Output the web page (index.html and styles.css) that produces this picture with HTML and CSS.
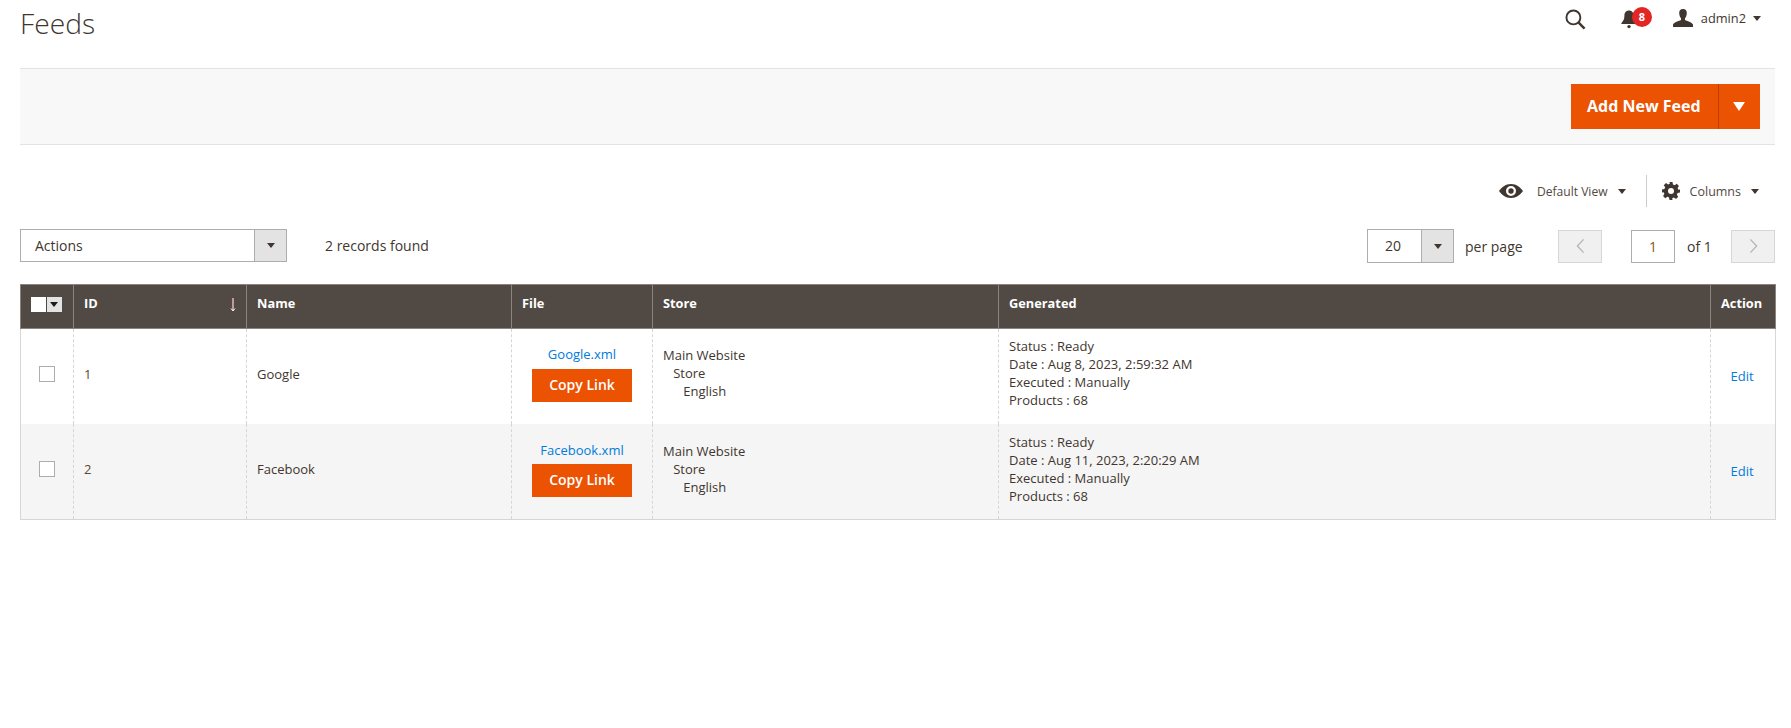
FILE: index.html
```html
<!DOCTYPE html>
<html lang="en">
<head>
<meta charset="utf-8">
<title>Feeds</title>
<link rel="stylesheet" href="styles.css">
</head>
<body>
<div class="page">
  <header class="top">
    <h1 class="title">Feeds</h1>
    <div class="top-actions">
      <svg class="ic-search" viewBox="0 0 22 22" width="21" height="21"><circle cx="8.8" cy="8.8" r="7.3" fill="none" stroke="#41362f" stroke-width="2"/><path d="M14 14l6.500 6.500" stroke="#41362f" stroke-width="2.600" fill="none"/></svg>
      <div class="bell">
        <svg viewBox="0 0 16 20" width="16" height="20"><path d="M8 1.500c-3 0-4.600 2.200-4.600 5.200 0 3.600-1.200 5.400-3 7.200v1.200h15.200v-1.200c-1.800-1.800-3-3.600-3-7.200C12.600 3.700 11 1.500 8 1.500z" fill="#41362f"/><circle cx="8" cy="17.600" r="1.700" fill="#41362f"/></svg>
        <span class="badge">8</span>
      </div>
      <div class="user">
        <svg viewBox="0 0 20 18" width="20" height="18"><path d="M10 0c-2.800 0-4 2-3.800 4.500.2 2.300 1 3.800 1.800 4.800v1.700c-2 1-7 2-8 4.500V18h20v-2.500c-1-2.500-6-3.500-8-4.500V9.300c.8-1 1.600-2.500 1.800-4.800C14 2 12.800 0 10 0z" fill="#41362f"/></svg>
        <span class="user-name">admin2</span>
        <i class="caret caret-sm"></i>
      </div>
    </div>
  </header>

  <div class="page-bar">
    <div class="split">
      <span class="split-main">Add New Feed</span>
      <span class="split-toggle"><i class="caret caret-white"></i></span>
    </div>
  </div>

  <div class="view-row">
    <div class="view-item">
      <svg viewBox="0 0 24 14" width="24" height="14"><path d="M12 0C6.500 0 2.400 3.600 0 7c2.400 3.400 6.500 7 12 7s9.600-3.600 12-7c-2.400-3.400-6.500-7-12-7zm0 12a5 5 0 1 1 0-10 5 5 0 0 1 0 10z" fill="#41362f" fill-rule="evenodd"/><circle cx="12" cy="7" r="2.700" fill="#41362f"/></svg>
      <span class="view-label view-label-first">Default View</span>
      <i class="caret caret-sm"></i>
    </div>
    <div class="view-item view-cols">
      <svg viewBox="0 0 24 24" width="18" height="18"><path d="M10 0h4l.6 3.200 2.300 1 2.800-1.800 2.900 2.900-1.800 2.800 1 2.300L24 10v4l-3.200.6-1 2.300 1.800 2.800-2.900 2.900-2.800-1.800-2.300 1L14 24h-4l-.6-3.200-2.300-1-2.800 1.800-2.900-2.900 1.800-2.800-1-2.300L0 14v-4l3.200-.6 1-2.300L2.400 4.300l2.900-2.900 2.800 1.800 2.300-1zM12 8a4 4 0 1 0 0 8 4 4 0 0 0 0-8z" fill="#41362f" fill-rule="evenodd"/></svg>
      <span class="view-label">Columns</span>
      <i class="caret caret-sm"></i>
    </div>
  </div>

  <div class="toolbar">
    <div class="tool-left">
      <div class="select select-actions"><span class="select-text">Actions</span><span class="select-arrow"><i class="caret caret-sm"></i></span></div>
      <span class="records">2 records found</span>
    </div>
    <div class="tool-right">
      <div class="select select-page"><span class="select-text select-num">20</span><span class="select-arrow"><i class="caret caret-sm"></i></span></div>
      <span class="per-page">per page</span>
      <span class="pager-btn pager-prev"><svg viewBox="0 0 10 18" width="9" height="16"><path d="M8.500 1.500L1.500 9l7 7.500" fill="none" stroke="#b5b5b5" stroke-width="1.500"/></svg></span>
      <span class="pager-input">1</span>
      <span class="of">of 1</span>
      <span class="pager-btn"><svg viewBox="0 0 10 18" width="9" height="16"><path d="M1.500 1.500l7 7.500-7 7.500" fill="none" stroke="#b5b5b5" stroke-width="1.500"/></svg></span>
    </div>
  </div>

  <table class="grid">
    <colgroup>
      <col class="c-check"><col class="c-id"><col class="c-name"><col class="c-file"><col class="c-store"><col class="c-gen"><col class="c-act">
    </colgroup>
    <thead>
      <tr>
        <th class="th-check"><span class="mass"><span class="mass-box"></span><span class="mass-arrow"><i class="caret caret-tiny"></i></span></span></th>
        <th class="th-id">ID<svg class="sort" viewBox="0 0 6 13" width="6" height="13"><path d="M3 0v12" fill="none" stroke="#e9b8ae" stroke-width="1.500"/><path d="M1 10.500L3 13l2-2.500" fill="none" stroke="#fff" stroke-width="1"/></svg></th>
        <th>Name</th>
        <th>File</th>
        <th>Store</th>
        <th>Generated</th>
        <th>Action</th>
      </tr>
    </thead>
    <tbody>
      <tr>
        <td class="mid"><span class="check"></span></td>
        <td class="mid td-id">1</td>
        <td class="mid">Google</td>
        <td class="td-file"><a class="link">Google.xml</a><span class="copy">Copy Link</span></td>
        <td class="td-store">Main Website<br>&nbsp;&nbsp;&nbsp;Store<br>&nbsp;&nbsp;&nbsp;&nbsp;&nbsp;&nbsp;English</td>
        <td class="td-gen">Status : Ready<br>Date : Aug 8, 2023, 2:59:32 AM<br>Executed : Manually<br>Products : 68</td>
        <td class="td-act"><a class="link">Edit</a></td>
      </tr>
      <tr class="alt">
        <td class="mid"><span class="check"></span></td>
        <td class="mid td-id">2</td>
        <td class="mid">Facebook</td>
        <td class="td-file"><a class="link">Facebook.xml</a><span class="copy">Copy Link</span></td>
        <td class="td-store">Main Website<br>&nbsp;&nbsp;&nbsp;Store<br>&nbsp;&nbsp;&nbsp;&nbsp;&nbsp;&nbsp;English</td>
        <td class="td-gen">Status : Ready<br>Date : Aug 11, 2023, 2:20:29 AM<br>Executed : Manually<br>Products : 68</td>
        <td class="td-act"><a class="link">Edit</a></td>
      </tr>
    </tbody>
  </table>
</div>
</body>
</html>
```
FILE: styles.css
```css
* { box-sizing: border-box; }
html, body { margin: 0; background: #fff; }
body { font-family: "Open Sans", "Liberation Sans", sans-serif; font-size: 13px; color: #41362f; }
.page { padding: 0 16px 0 20px; }

.top { height: 68px; display: flex; justify-content: space-between; align-items: flex-start; }
.title { margin: 4px 0 0; font-size: 28.200px; font-weight: 350; line-height: 38px; color: #41362f; }
.top-actions { display: flex; align-items: center; height: 38px; margin-right: 14px; }
.ic-search { margin-top: 1px; }
.bell { position: relative; display: flex; margin-left: 35px; }
.badge { position: absolute; left: 11px; top: -2px; width: 20px; height: 20px; border-radius: 50%; background: #e22626; color: #fff; font-size: 11px; font-weight: 700; line-height: 20px; text-align: center; }
.user { display: flex; align-items: center; margin-left: 36px; margin-top: -2px; }
.user-name { margin-left: 8px; margin-right: 7px; font-size: 12.800px; color: #41362f; }

.caret { display: inline-block; width: 0; height: 0; border-style: solid; border-color: #41362f transparent transparent; }
.caret-sm { border-width: 5px 4px 0; }
.caret-tiny { border-width: 5px 4px 0; border-top-color: #1f1a17; }
.caret-white { border-width: 9px 6px 0; border-top-color: #fff; }

.page-bar { height: 77px; background: #f8f8f8; border-top: 1px solid #e3e3e3; border-bottom: 1px solid #e3e3e3; display: flex; justify-content: flex-end; align-items: center; padding-right: 15px; }
.split { display: flex; height: 45px; background: #eb5202; color: #fff; font-size: 16px; font-weight: 700; }
.split-main { width: 148px; display: flex; align-items: center; padding: 0 0 2px 16px; border-right: 1px solid #b84002; }
.split-toggle { width: 41px; padding-right: 1px; display: flex; align-items: center; justify-content: center; }

.view-row { display: flex; justify-content: flex-end; align-items: center; height: 32px; margin-top: 30px; padding-right: 16px; }
.view-item { display: flex; align-items: center; }
.view-label { margin-left: 10px; margin-right: 10px; font-size: 12.500px; color: #514943; }
.view-label-first { margin-left: 14px; font-size: 12.100px; }
.view-cols { margin-left: 20px; border-left: 1px solid #ccc; height: 32px; padding-left: 15px; }

.toolbar { display: flex; justify-content: space-between; align-items: flex-start; height: 34px; margin-top: 22px; }
.tool-left, .tool-right { display: flex; align-items: center; }
.select { display: flex; border: 1px solid #adadad; background: #fff; }
.select-actions { width: 267px; height: 33px; }
.select-page { width: 87px; height: 34px; }
.select-text { flex: 1; padding-left: 14px; font-size: 14px; line-height: 31px; color: #41362f; }
.select-num { padding-left: 17px; line-height: 32px; }
.select-arrow { width: 32px; background: #e3e3e3; border-left: 1px solid #adadad; display: flex; align-items: center; justify-content: center; }
.records { margin-left: 38px; font-size: 14px; color: #41362f; }
.per-page { margin-left: 11px; font-size: 14px; width: 93px; }
.pager-btn { width: 44px; height: 33px; background: #f0f0f0; border: 1px solid #d6d6d6; display: flex; align-items: center; justify-content: center; }
.pager-input { width: 44px; height: 33px; margin-left: 29px; border: 1px solid #adadad; text-align: center; font-size: 14px; line-height: 31px; color: #8a5a14; }
.of { margin-left: 12px; width: 44px; font-size: 14px; }

.grid { width: 1755px; margin-top: 21px; border-collapse: collapse; table-layout: fixed; font-size: 13px; }
.c-check { width: 53px; }
.c-id { width: 173px; }
.c-name { width: 265px; }
.c-file { width: 141px; }
.c-store { width: 346px; }
.c-gen { width: 712px; }
.c-act { width: 65px; }
.grid th { height: 44px; padding: 0 0 7px 10px; background: #514943; border: 1px solid #8a837f; color: #fff; font-weight: 700; font-size: 12.800px; text-align: left; }
.grid th.th-check { padding-bottom: 5px; }
.th-id { position: relative; }
.sort { position: absolute; right: 10px; top: 13px; }
.mass { display: flex; width: 31px; height: 15px; }
.mass-box { width: 15px; background: #fff; }
.mass-arrow { width: 16px; margin-left: 1px; background: #e3e3e3; display: flex; align-items: center; justify-content: center; }
.grid td { height: 95px; padding: 0 10px; vertical-align: top; border-left: 1px dashed #d6d6d6; border-right: 1px dashed #d6d6d6; border-bottom: 0; }
.grid td:first-child { border-left: 1px solid #d6d6d6; }
.grid td:last-child { border-right: 1px solid #d6d6d6; }
.grid tr:last-child td { height: 96px; border-bottom: 1px solid #d6d6d6; }
.alt td { background: #f5f5f5; }
.grid td.mid { vertical-align: middle; padding-bottom: 4px; }
.td-id { color: #5c4a2c; }
.check { display: block; width: 16px; height: 16px; margin-left: 8px; background: #fff; border: 1px solid #adadad; }
.grid td.td-file { padding-top: 16px; text-align: center; }
.grid .alt td.td-file { padding-top: 17px; }
.link { color: #007bdb; }
.copy { display: block; width: 100px; height: 33px; margin: 6px auto 0; background: #eb5202; color: #fff; font-size: 14px; font-weight: 600; line-height: 32px; text-align: center; }
.alt .copy { margin-top: 5px; }
.grid td.td-store { padding-top: 17px; }
.grid .alt td.td-store { padding-top: 18px; }
.grid td.td-gen { padding-top: 8px; }
.grid .alt td.td-gen { padding-top: 9px; }
.grid td.td-act { padding: 38px 12px 0 10px; text-align: center; }
```
